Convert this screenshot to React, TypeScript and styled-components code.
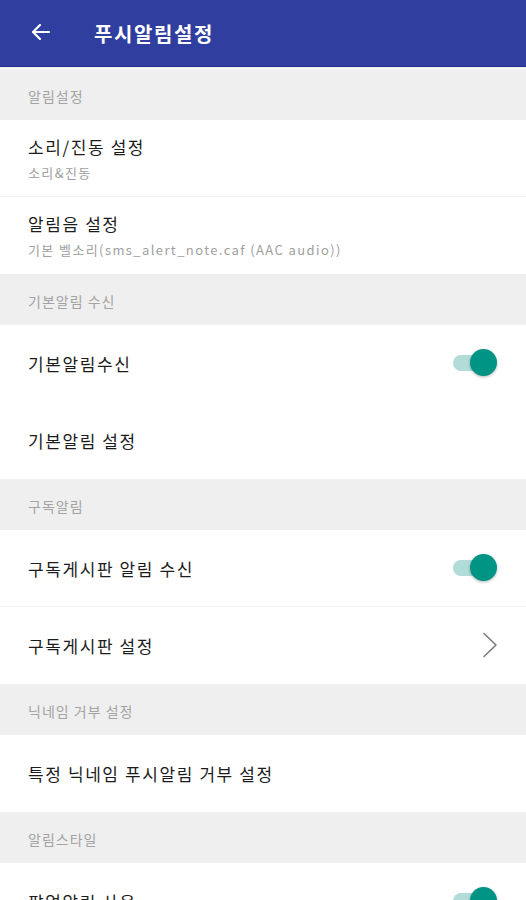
import styled, { createGlobalStyle } from "styled-components";

const GlobalStyle = createGlobalStyle`
  html, body {
    margin: 0;
    padding: 0;
    background: #ffffff;
  }
  body {
    font-family: "Noto Sans CJK KR", "Noto Sans", sans-serif;
  }
`;

type Item = {
  title: string;
  sub?: string;
  right?: "toggle" | "chevron";
  last?: boolean;
};

type Group = {
  label: string;
  items: Item[];
};

const groups: Group[] = [
  {
    label: "알림설정",
    items: [
      { title: "소리/진동 설정", sub: "소리&진동" },
      { title: "알림음 설정", sub: "기본 벨소리(sms_alert_note.caf (AAC audio))", last: true },
    ],
  },
  {
    label: "기본알림 수신",
    items: [
      { title: "기본알림수신", right: "toggle", last: true },
      { title: "기본알림 설정", last: true },
    ],
  },
  {
    label: "구독알림",
    items: [
      { title: "구독게시판 알림 수신", right: "toggle" },
      { title: "구독게시판 설정", right: "chevron", last: true },
    ],
  },
  {
    label: "닉네임 거부 설정",
    items: [{ title: "특정 닉네임 푸시알림 거부 설정", last: true }],
  },
  {
    label: "알림스타일",
    items: [{ title: "팝업알림 사용", right: "toggle", last: true }],
  },
];

export default function App() {
  return (
    <>
      <GlobalStyle />
      <Page>
        <AppBar>
          <BackButton aria-label="뒤로">
            <svg width="24" height="24" viewBox="0 0 24 24" fill="none">
              <path
                d="M20 12H5M11 5l-7 7 7 7"
                stroke="#ffffff"
                strokeWidth="2.2"
                strokeLinecap="round"
                strokeLinejoin="round"
              />
            </svg>
          </BackButton>
          <Title>푸시알림설정</Title>
        </AppBar>

        {groups.map((g) => (
          <section key={g.label}>
            <SectionHeader>{g.label}</SectionHeader>
            {g.items.map((it) => (
              <Row key={it.title} $last={it.last}>
                <TextCol>
                  <RowTitle>{it.title}</RowTitle>
                  {it.sub && <RowSub>{it.sub}</RowSub>}
                </TextCol>
                {it.right === "toggle" && (
                  <Switch>
                    <Track />
                    <Thumb />
                  </Switch>
                )}
                {it.right === "chevron" && (
                  <svg width="16" height="26" viewBox="0 0 16 26" fill="none">
                    <path
                      d="M2 1.5l12 11.5L2 24.5"
                      stroke="#7a7a7a"
                      strokeWidth="1.6"
                      strokeLinecap="round"
                      strokeLinejoin="round"
                    />
                  </svg>
                )}
              </Row>
            ))}
          </section>
        ))}
      </Page>
    </>
  );
}

/* ---------------- styles ---------------- */

const Page = styled.div`
  width: 526px;
  min-height: 900px;
  background: #ffffff;
  overflow: hidden;
`;

const AppBar = styled.header`
  height: 66px;
  background: #303f9f;
  border-bottom: 1px solid #26338a;
  margin-bottom: 2px;
  box-shadow: 0 1px 1px rgba(0, 0, 0, 0.08);
  display: flex;
  align-items: center;
  padding-left: 29px;
  box-sizing: content-box;
`;

const BackButton = styled.div`
  width: 24px;
  height: 24px;
  display: flex;
  align-items: center;
  justify-content: center;
  margin-right: 41px;
  margin-top: -2px;
`;

const Title = styled.h1`
  margin: 0;
  color: #ffffff;
  font-size: 20px;
  font-weight: 700;
  letter-spacing: 1.6px;
`;

const SectionHeader = styled.div`
  height: 51px;
  background: #efefef;
  display: flex;
  align-items: center;
  padding: 3px 28px 0;
  box-sizing: border-box;
  color: #a3a3a3;
  font-size: 14px;
  letter-spacing: 1px;
`;

const Row = styled.div<{ $last?: boolean }>`
  height: 77px;
  box-sizing: border-box;
  border-bottom: 1px solid ${(p) => (p.$last ? "transparent" : "#f1f1f1")};
  display: flex;
  align-items: center;
  justify-content: space-between;
  padding: 0 28px 0 28px;
`;

const TextCol = styled.div`
  display: flex;
  flex-direction: column;
  gap: 6px;
  padding-top: 1px;
`;

const RowTitle = styled.div`
  color: #1c1c1c;
  font-size: 17px;
  line-height: 22px;
  letter-spacing: 1.6px;
`;

const RowSub = styled.div`
  color: #a0a0a0;
  font-size: 13px;
  line-height: 18px;
  letter-spacing: 1.4px;
`;

const Switch = styled.div`
  position: relative;
  width: 44px;
  height: 28px;
  display: flex;
  align-items: center;
  margin-right: 1px;
`;

const Track = styled.div`
  width: 40px;
  height: 16px;
  border-radius: 8px;
  background: #b2dcd7;
`;

const Thumb = styled.div`
  position: absolute;
  right: 0;
  top: 0;
  width: 27px;
  height: 27px;
  border-radius: 50%;
  background: #009485;
  box-shadow: 0 1px 3px rgba(0, 0, 0, 0.3);
`;
